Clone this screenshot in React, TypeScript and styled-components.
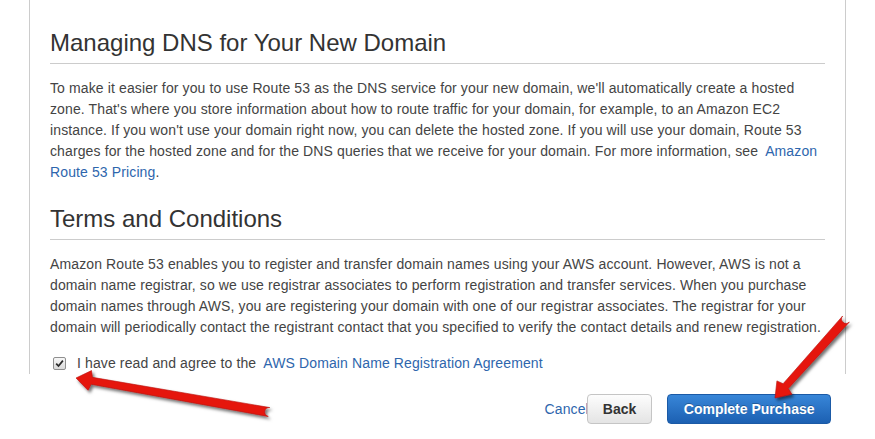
import React from "react";
import styled, { createGlobalStyle } from "styled-components";

const GlobalStyle = createGlobalStyle`
  html, body {
    margin: 0;
    padding: 0;
    background: #ffffff;
  }
  body {
    font-family: "Liberation Sans", Arial, Helvetica, sans-serif;
    color: #444444;
  }
`;

const Page = styled.div`
  position: relative;
  width: 875px;
  height: 439px;
  overflow: hidden;
  background: #ffffff;
`;

const Panel = styled.div`
  margin-left: 29px;
  width: 775px;
  padding: 30px 20px 0 20px;
  border-left: 1px solid #cccccc;
  border-right: 1px solid #cccccc;
`;

const SectionTitle = styled.h2<{ $first?: boolean }>`
  margin: ${(p) => (p.$first ? "0" : "23px")} 0 0 0;
  padding: 0 0 7px 0;
  font-size: 24px;
  line-height: 26px;
  font-weight: normal;
  color: #333333;
  border-bottom: 1px solid #cccccc;
`;

const Body = styled.p`
  margin: 14px 0 0 0;
  font-size: 14px;
  line-height: 21px;
  letter-spacing: 0.12px;
  white-space: nowrap;
  color: #444444;
`;

const Link = styled.a<{ $flush?: boolean }>`
  color: #2e66ad;
  text-decoration: none;
  margin-left: ${(p) => (p.$flush ? "0" : "3px")};
  cursor: pointer;
`;

const AgreeRow = styled.label`
  display: flex;
  align-items: center;
  height: 21px;
  margin-top: 15px;
  padding-left: 3px;
  font-size: 14px;
  line-height: 21px;
  letter-spacing: 0.12px;
  white-space: pre;
  color: #444444;
`;

const CheckBox = styled.span`
  display: inline-flex;
  align-items: center;
  justify-content: center;
  box-sizing: border-box;
  width: 13px;
  height: 13px;
  margin-right: 11px;
  border: 1px solid #8f8f8f;
  border-radius: 2px;
  background: linear-gradient(#f7f7f7, #dadada);
`;

const Actions = styled.div`
  display: flex;
  align-items: center;
  justify-content: flex-end;
  margin-top: 20px;
  padding-right: 44px;
`;

const CancelLink = styled.a`
  font-size: 14px;
  letter-spacing: 0.12px;
  color: #2e66ad;
  text-decoration: none;
  margin-right: -2px;
  cursor: pointer;
`;

const Button = styled.button<{ $primary?: boolean }>`
  position: relative;
  height: 30px;
  padding: 0 ${(p) => (p.$primary ? "15.5px" : "15px")};
  margin-left: ${(p) => (p.$primary ? "15px" : "0")};
  border-radius: 4px;
  font-family: "Liberation Sans", Arial, Helvetica, sans-serif;
  font-size: 14px;
  font-weight: bold;
  cursor: pointer;
  color: ${(p) => (p.$primary ? "#ffffff" : "#333333")};
  border: 1px solid ${(p) => (p.$primary ? "#1b5aa6" : "#c5c5c5")};
  background: ${(p) =>
    p.$primary
      ? "linear-gradient(#3886d8, #1c60b2)"
      : "linear-gradient(#fdfdfd, #e4e4e4)"};
  text-shadow: ${(p) => (p.$primary ? "0 -1px 0 rgba(0,0,0,0.25)" : "none")};
`;

const Overlay = styled.svg`
  position: absolute;
  left: 0;
  top: 0;
  width: 875px;
  height: 439px;
  pointer-events: none;
`;

type Pt = [number, number];

function arrowPath(tail: Pt, tip: Pt, wTail: number, wHead: number, headLen: number, headHalf: number) {
  const dx = tip[0] - tail[0];
  const dy = tip[1] - tail[1];
  const len = Math.hypot(dx, dy);
  const ux = dx / len;
  const uy = dy / len;
  const nx = -uy;
  const ny = ux;
  const bx = tip[0] - ux * headLen;
  const by = tip[1] - uy * headLen;
  const p = (x: number, y: number) => `${x.toFixed(2)} ${y.toFixed(2)}`;
  return [
    `M ${p(tail[0] + nx * wTail, tail[1] + ny * wTail)}`,
    `L ${p(bx + nx * wHead, by + ny * wHead)}`,
    `L ${p(bx + ux * 2 + nx * headHalf, by + uy * 2 + ny * headHalf)}`,
    `L ${p(tip[0], tip[1])}`,
    `L ${p(bx + ux * 2 - nx * headHalf, by + uy * 2 - ny * headHalf)}`,
    `L ${p(bx - nx * wHead, by - ny * wHead)}`,
    `L ${p(tail[0] - nx * wTail, tail[1] - ny * wTail)}`,
    `A ${wTail} ${wTail} 0 0 1 ${p(tail[0] + nx * wTail, tail[1] + ny * wTail)}`,
    "Z",
  ].join(" ");
}

const Arrow: React.FC<{ tail: Pt; tip: Pt }> = ({ tail, tip }) => (
  <path
    d={arrowPath(tail, tip, 4.5, 3.5, 16, 10)}
    fill="#e5170f"
    stroke="#b80d08"
    strokeWidth={0.6}
    filter="url(#arrowShadow)"
  />
);

export default function App() {
  return (
    <Page>
      <GlobalStyle />
      <Panel>
        <SectionTitle $first>Managing DNS for Your New Domain</SectionTitle>
        <Body>
          To make it easier for you to use Route 53 as the DNS service for your new domain, we'll automatically
          create a hosted
          <br />
          zone. That's where you store information about how to route traffic for your domain, for example, to an
          Amazon EC2
          <br />
          instance. If you won't use your domain right now, you can delete the hosted zone. If you will use your
          domain, Route 53
          <br />
          charges for the hosted zone and for the DNS queries that we receive for your domain. For more information,
          see <Link>Amazon</Link>
          <br />
          <Link $flush>Route 53 Pricing</Link>.
        </Body>

        <SectionTitle>Terms and Conditions</SectionTitle>
        <Body>
          Amazon Route 53 enables you to register and transfer domain names using your AWS account. However, AWS is
          not a
          <br />
          domain name registrar, so we use registrar associates to perform registration and transfer services. When
          you purchase
          <br />
          domain names through AWS, you are registering your domain with one of our registrar associates. The
          registrar for your
          <br />
          domain will periodically contact the registrant contact that you specified to verify the contact details
          and renew registration.
        </Body>

        <AgreeRow>
          <CheckBox>
            <svg width="9" height="9" viewBox="0 0 9 9">
              <path d="M1.2 4.6 L3.5 7 L7.9 1.6" fill="none" stroke="#2b2b2b" strokeWidth="1.7" />
            </svg>
          </CheckBox>
          I have read and agree to the <Link>AWS Domain Name Registration Agreement</Link>
        </AgreeRow>
      </Panel>

      <Actions>
        <CancelLink>Cancel</CancelLink>
        <Button>Back</Button>
        <Button $primary>Complete Purchase</Button>
      </Actions>

      <Overlay viewBox="0 0 875 439">
        <defs>
          <filter id="arrowShadow" x="-20%" y="-20%" width="140%" height="140%">
            <feDropShadow dx="2" dy="2.5" stdDeviation="1.6" floodColor="#000000" floodOpacity="0.55" />
          </filter>
        </defs>
        <Arrow tail={[269, 412]} tip={[76, 378]} />
        <Arrow tail={[846, 319]} tip={[775, 398]} />
      </Overlay>
    </Page>
  );
}
